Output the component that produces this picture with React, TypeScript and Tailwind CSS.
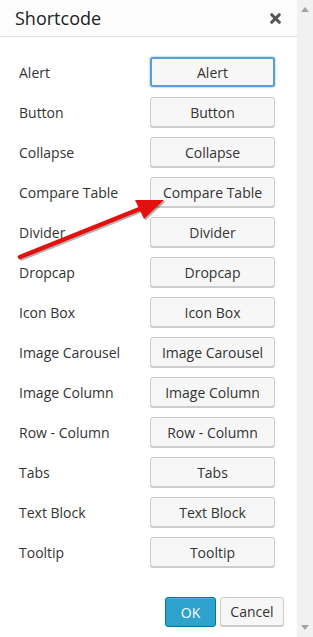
import { X } from 'lucide-react'

const items = [
  'Alert',
  'Button',
  'Collapse',
  'Compare Table',
  'Divider',
  'Dropcap',
  'Icon Box',
  'Image Carousel',
  'Image Column',
  'Row - Column',
  'Tabs',
  'Text Block',
  'Tooltip',
]

const App = () => {
  return (
    <div className="relative flex w-[313px] h-[637px] bg-white font-['Open_Sans',sans-serif] text-[#333]">
      <div className="flex flex-col w-[297px] h-full">
        {/* header */}
        <div className="flex items-center justify-between h-[37px] pl-[15px] pr-[14px] bg-[#fcfcfc] border-b border-[#ddd]">
          <h1 className="text-[18px] leading-none text-[#222]">Shortcode</h1>
          <X className="w-[15px] h-[15px] text-[#555]" strokeWidth={5} />
        </div>

        {/* list */}
        <div className="flex flex-col gap-[10px] pt-[20px] pl-[19px] pr-[22px]">
          {items.map((item, i) => (
            <div key={item} className="flex items-center justify-between h-[30px]">
              <span className="text-[14px] pt-px">{item}</span>
              <button
                className={
                  i === 0
                    ? 'w-[125px] h-[30px] rounded-[3px] border-2 border-[#5b9dd9] bg-[#f7f7f7] text-[14px] text-[#333] shadow-[0_0_2px_rgba(30,140,190,0.8)]'
                    : 'w-[125px] h-[30px] rounded-[3px] border border-[#ccc] bg-[#f7f7f7] text-[14px] text-[#333] shadow-[0_1px_0_#ccc]'
                }
              >
                {item}
              </button>
            </div>
          ))}
        </div>

        {/* footer */}
        <div className="flex justify-end gap-[4px] pt-[30px] pr-[13px]">
          <button className="w-[51px] h-[30px] rounded-[3px] border border-[#0074a2] bg-[#2ea2cc] text-[14px] text-white shadow-[inset_0_1px_0_rgba(120,200,230,0.5)]">
            OK
          </button>
          <button className="w-[64px] h-[29px] rounded-[3px] border border-[#ccc] bg-[#f7f7f7] text-[14px] text-[#333] shadow-[0_1px_0_#ccc]">
            Cancel
          </button>
        </div>
      </div>

      {/* scrollbar */}
      <div className="flex flex-col justify-between items-center w-4 h-full bg-[#f1f1f1] py-[7px]">
        <svg width="8" height="5" viewBox="0 0 8 5"><path d="M4 0 L8 5 L0 5 Z" fill="#a3a3a3" /></svg>
        <svg width="8" height="5" viewBox="0 0 8 5"><path d="M0 0 L8 0 L4 5 Z" fill="#a3a3a3" /></svg>
      </div>

      {/* red arrow annotation */}
      <svg className="absolute left-0 top-0 pointer-events-none" width="313" height="637" viewBox="0 0 313 637">
        <g transform="translate(1.5,1.5)" opacity="0.3">
          <line x1="20" y1="257" x2="142" y2="208" stroke="#000" strokeWidth="4.5" strokeLinecap="round" />
          <polygon points="164,200 144,219 135,200" fill="#000" />
        </g>
        <line x1="20" y1="257" x2="142" y2="208" stroke="#e3100f" strokeWidth="4.5" strokeLinecap="round" />
        <polygon points="164,200 144,219 135,200" fill="#e3100f" />
      </svg>
    </div>
  )
}

export default App
